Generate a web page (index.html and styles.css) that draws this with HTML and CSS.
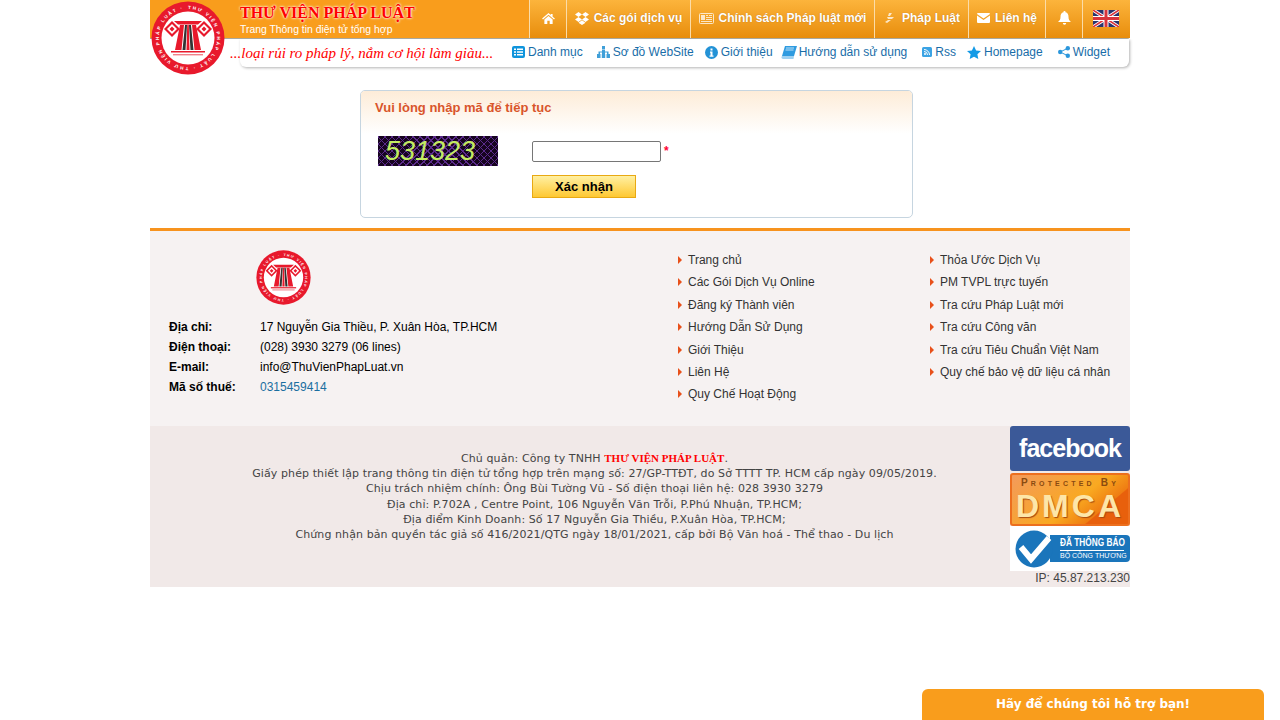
FILE: index.html
```html
<!DOCTYPE html>
<html lang="vi">
<head>
    <meta charset="UTF-8">
    <meta name="viewport" content="width=device-width, initial-scale=1.0">
    <title>Thư Viện Pháp Luật</title>
    <link rel="stylesheet" href="styles.css">
</head>
<body>
    <div class="page">
        <header class="header">
            <svg class="seal-top" viewBox="0 0 74 74">
                <circle cx="37" cy="37" r="36.5" fill="#e8192c"/>
                <circle cx="37" cy="37" r="26.5" fill="#fff"/>
                <path id="ring-top" d="M37 8a29 29 0 1 1-.01 0" fill="none"/>
                <text class="seal-text"><textPath href="#ring-top" textLength="176">THƯ VIỆN PHÁP LUẬT · THƯ VIỆN PHÁP LUẬT · </textPath></text>
                <path d="M21 20l8 8-8 8-8-8z" fill="#e8192c"/>
                <path d="M21 23l5 5-5 5-5-5z" fill="#fff"/>
                <path d="M21 25.500l2.500 2.500-2.500 2.500-2.500-2.500z" fill="#e8192c"/>
                <path d="M53 20l8 8-8 8-8-8z" fill="#e8192c"/>
                <path d="M53 23l5 5-5 5-5-5z" fill="#fff"/>
                <path d="M53 25.500l2.500 2.500-2.500 2.500-2.500-2.500z" fill="#e8192c"/>
                <path d="M23 20h28l-4 3.500H27z" fill="#e8192c"/>
                <path d="M29 24h4l-2.500 25h-6.500zM41 24h4l5 25h-6.500z" fill="#e8192c"/>
                <path d="M34 24h2l-1.500 25h-3zM38 24h2l2.500 25h-3z" fill="#333"/>
                <path d="M36.200 24h1.600l.700 25h-3z" fill="#e8192c"/>
                <path d="M20 50h34v1.600H20z" fill="#e8192c"/>
                <path d="M22 53h30v1.400H22z" fill="#f28089"/>
            </svg>
            <div class="topbar">
                <div class="brand">
                    <div class="brand-name">THƯ VIỆN PHÁP LUẬT</div>
                    <div class="brand-sub">Trang Thông tin điện tử tổng hợp</div>
                </div>
                <nav class="mainnav">
                    <a class="nav-home">
                        <svg width="13" height="11" viewBox="0 0 14 12"><path d="M7 0 0 6l1 1 6-5 6 5 1-1-2.500-2V1h-2v1.200z" fill="#fff"/><path d="M2.500 7 7 3.200 11.500 7v5H8.300V8.500H5.700V12H2.500z" fill="#fff"/></svg>
                    </a>
                    <a class="nav-packs">
                        <svg width="14" height="13" viewBox="0 0 14 13"><path d="M3.500 0 7 2.500 3.500 5 0 2.500zM10.500 0 14 2.500 10.500 5 7 2.500zM3.500 5 7 7.500 3.500 10 0 7.500zM10.500 5 14 7.500 10.500 10 7 7.500zM3.500 10.800 7 8.300l3.500 2.500L7 13z" fill="#fff"/></svg>
                        Các gói dịch vụ
                    </a>
                    <a class="nav-policy">
                        <svg class="dim" width="15" height="11" viewBox="0 0 15 11"><rect x=".5" y=".5" width="14" height="10" rx="1" fill="none" stroke="#fff"/><path d="M2 2h4v5H2zM7 2h2v1H7zM10 2h3v1h-3zM7 4h6v1H7zM7 6h6v1H7zM2 8h11v1H2z" fill="#fff"/></svg>
                        Chính sách Pháp luật mới
                    </a>
                    <a class="nav-law">
                        <svg class="dim" width="10" height="11" viewBox="0 0 10 11"><path d="M4 0h3L5 3H3zM2 4h7L7 6H3zM0 9l3-2h3L2 10z" fill="#fff"/></svg>
                        Pháp Luật
                    </a>
                    <a class="nav-contact">
                        <svg width="13" height="10" viewBox="0 0 13 10"><path d="M0 1a1 1 0 0 1 1-1h11a1 1 0 0 1 1 1L6.500 5.500z" fill="#fff"/><path d="M0 2.500 6.500 7 13 2.500V9a1 1 0 0 1-1 1H1a1 1 0 0 1-1-1z" fill="#fff"/></svg>
                        Liên hệ
                    </a>
                    <a class="nav-bell">
                        <svg width="13" height="14" viewBox="0 0 13 14"><path d="M6.500 0a1 1 0 0 1 1 1.200C9.800 1.700 10.500 3.600 10.500 6c0 2.500 1 3.500 2.500 5H0c1.500-1.500 2.500-2.500 2.500-5 0-2.400.7-4.300 3-4.800a1 1 0 0 1 1-1.200zM4.800 12h3.400a1.700 1.700 0 0 1-3.400 0z" fill="#fff"/></svg>
                    </a>
                    <a class="nav-flag">
                        <svg width="26" height="17" viewBox="0 0 26 17">
                            <rect width="26" height="17" fill="#27346e"/>
                            <path d="M0 0 26 17M26 0 0 17" stroke="#fff" stroke-width="3.400"/>
                            <path d="M0 0 26 17M26 0 0 17" stroke="#d8343c" stroke-width="1.600"/>
                            <path d="M13 0v17M0 8.500h26" stroke="#fff" stroke-width="5"/>
                            <path d="M13 0v17M0 8.500h26" stroke="#d8343c" stroke-width="3"/>
                        </svg>
                    </a>
                </nav>
            </div>
            <div class="subbar">
                <div class="slogan">...loại rủi ro pháp lý, nắm cơ hội làm giàu...</div>
                <a class="sub-link sub-catalog">
                    <svg width="13" height="12" viewBox="0 0 13 12"><rect width="13" height="12" rx="2" fill="#0f94dc"/><path d="M2 2.500h2v1.500H2zM5 2.500h6v1.500H5zM2 5.300h2v1.500H2zM5 5.300h6v1.500H5zM2 8h2v1.500H2zM5 8h6v1.500H5z" fill="#fff"/></svg>
                    Danh mục
                </a>
                <a class="sub-link sub-sitemap">
                    <svg width="13" height="12" viewBox="0 0 13 12"><path d="M5 0h3v3.500H5zM0 8h3.500v4H0zM4.800 8h3.400v4H4.800zM9.500 8H13v4H9.500zM5 4h3v1.500h3.500V8H10V6.500H8V8H5V6.500H3V8H1.500V5.500H5z" fill="#3f9fd8"/></svg>
                    Sơ đồ WebSite
                </a>
                <a class="sub-link sub-about">
                    <svg width="13" height="13" viewBox="0 0 13 13"><circle cx="6.500" cy="6.500" r="6.500" fill="#2392d6"/><path d="M5.500 2.500h2v2h-2zM5 5.500h2.500V9.500h1v1.200H4.500V9.500h1V6.700H5z" fill="#fff"/></svg>
                    Giới thiệu
                </a>
                <a class="sub-link sub-guide">
                    <svg width="16" height="13" viewBox="0 0 16 13"><path d="M4 0h12l-3 10H1z" fill="#2f9be0"/><path d="M1 10h12l-.5 3H2a2 2 0 0 1-1-3z" fill="#9ed1f2"/><path d="M5 2h8M4.500 4h8" stroke="#bfe2f8"/></svg>
                    Hướng dẫn sử dụng
                </a>
                <a class="sub-link sub-rss">
                    <svg width="10" height="10" viewBox="0 0 10 10"><rect width="10" height="10" rx="1.500" fill="#3ba3e4"/><circle cx="3" cy="7" r="1" fill="#fff"/><path d="M2 4.500A3.500 3.500 0 0 1 5.500 8M2 2.500A5.500 5.500 0 0 1 7.500 8" stroke="#fff" fill="none"/></svg>
                    Rss
                </a>
                <a class="sub-link sub-home">
                    <svg width="14" height="13" viewBox="0 0 14 13"><path d="m7 0 2.100 4.400 4.900.6-3.600 3.300.9 4.700L7 10.700 2.700 13l.9-4.700L0 5l4.900-.6z" fill="#139ae6"/></svg>
                    Homepage
                </a>
                <a class="sub-link sub-widget">
                    <svg width="12" height="12" viewBox="0 0 12 12"><circle cx="9.800" cy="2.200" r="2.200" fill="#2b97dc"/><circle cx="2.200" cy="6" r="2.200" fill="#2b97dc"/><circle cx="9.800" cy="9.800" r="2.200" fill="#2b97dc"/><path d="M9.800 2.200 2.200 6l7.600 3.800" stroke="#2b97dc" fill="none"/></svg>
                    Widget
                </a>
            </div>
        </header>

        <main class="captcha-box">
            <h2 class="captcha-title">Vui lòng nhập mã để tiếp tục</h2>
            <div class="captcha-body">
                <div class="captcha-img">531323</div>
                <form class="captcha-form">
                    <div class="captcha-row">
                        <input class="captcha-input" type="text">
                        <span class="required">*</span>
                    </div>
                    <button class="captcha-btn" type="button">Xác nhận</button>
                </form>
            </div>
        </main>

        <footer class="footer">
            <div class="footer-top">
                <div class="contact">
                    <svg class="seal-foot" viewBox="0 0 74 74">
                        <circle cx="37" cy="37" r="36.5" fill="#e8192c"/>
                        <circle cx="37" cy="37" r="26.5" fill="#fff"/>
                        <path id="ring-foot" d="M37 8a29 29 0 1 1-.01 0" fill="none"/>
                        <text class="seal-text"><textPath href="#ring-foot" textLength="176">THƯ VIỆN PHÁP LUẬT · THƯ VIỆN PHÁP LUẬT · </textPath></text>
                        <path d="M21 20l8 8-8 8-8-8z" fill="#e8192c"/>
                        <path d="M21 23l5 5-5 5-5-5z" fill="#fff"/>
                        <path d="M21 25.500l2.500 2.500-2.500 2.500-2.500-2.500z" fill="#e8192c"/>
                        <path d="M53 20l8 8-8 8-8-8z" fill="#e8192c"/>
                        <path d="M53 23l5 5-5 5-5-5z" fill="#fff"/>
                        <path d="M53 25.500l2.500 2.500-2.500 2.500-2.500-2.500z" fill="#e8192c"/>
                        <path d="M23 20h28l-4 3.500H27z" fill="#e8192c"/>
                        <path d="M29 24h4l-2.500 25h-6.500zM41 24h4l5 25h-6.500z" fill="#e8192c"/>
                        <path d="M34 24h2l-1.500 25h-3zM38 24h2l2.500 25h-3z" fill="#333"/>
                        <path d="M36.200 24h1.600l.700 25h-3z" fill="#e8192c"/>
                        <path d="M20 50h34v1.600H20z" fill="#e8192c"/>
                        <path d="M22 53h30v1.400H22z" fill="#f28089"/>
                    </svg>
                    <div class="contact-row"><b>Địa chỉ:</b><span>17 Nguyễn Gia Thiều, P. Xuân Hòa, TP.HCM</span></div>
                    <div class="contact-row"><b>Điện thoại:</b><span>(028) 3930 3279 (06 lines)</span></div>
                    <div class="contact-row"><b>E-mail:</b><span>info@ThuVienPhapLuat.vn</span></div>
                    <div class="contact-row"><b>Mã số thuế:</b><span class="tax">0315459414</span></div>
                </div>
                <ul class="links links-one">
                    <li>Trang chủ</li>
                    <li>Các Gói Dịch Vụ Online</li>
                    <li>Đăng ký Thành viên</li>
                    <li>Hướng Dẫn Sử Dụng</li>
                    <li>Giới Thiệu</li>
                    <li>Liên Hệ</li>
                    <li>Quy Chế Hoạt Động</li>
                </ul>
                <ul class="links links-two">
                    <li>Thỏa Ước Dịch Vụ</li>
                    <li>PM TVPL trực tuyến</li>
                    <li>Tra cứu Pháp Luật mới</li>
                    <li>Tra cứu Công văn</li>
                    <li>Tra cứu Tiêu Chuẩn Việt Nam</li>
                    <li>Quy chế bảo vệ dữ liệu cá nhân</li>
                </ul>
            </div>
            <div class="footer-bottom">
                <div class="legal">
                    <p>Chủ quản: Công ty TNHH <b class="legal-name">THƯ VIỆN PHÁP LUẬT</b>.</p>
                    <p>Giấy phép thiết lập trang thông tin điện tử tổng hợp trên mạng số: 27/GP-TTĐT, do Sở TTTT TP. HCM cấp ngày 09/05/2019.</p>
                    <p>Chịu trách nhiệm chính: Ông Bùi Tường Vũ - Số điện thoại liên hệ: 028 3930 3279</p>
                    <p>Địa chỉ: P.702A , Centre Point, 106 Nguyễn Văn Trỗi, P.Phú Nhuận, TP.HCM;</p>
                    <p>Địa điểm Kinh Doanh: Số 17 Nguyễn Gia Thiều, P.Xuân Hòa, TP.HCM;</p>
                    <p>Chứng nhận bản quyền tác giả số 416/2021/QTG ngày 18/01/2021, cấp bởi Bộ Văn hoá - Thể thao - Du lịch</p>
                </div>
                <div class="badges">
                    <div class="badge-fb">facebook</div>
                    <div class="badge-dmca">
                        <div class="dmca-top">Protected By</div>
                        <div class="dmca-big">DMCA</div>
                    </div>
                    <div class="badge-bct">
                        <svg class="bct-check" width="38" height="38" viewBox="0 0 38 38"><circle cx="19" cy="19" r="18.500" fill="#1a75bb"/><path d="M6 17 16 29 34 8" fill="none" stroke="#fff" stroke-width="6"/></svg>
                        <div class="bct-text">
                            <div class="bct-main"><span>ĐÃ THÔNG BÁO</span></div>
                            <div class="bct-sub">BỘ CÔNG THƯƠNG</div>
                        </div>
                    </div>
                    <div class="ip">IP: 45.87.213.230</div>
                </div>
            </div>
        </footer>
    </div>

    <div class="support">Hãy để chúng tôi hỗ trợ bạn!</div>
</body>
</html>
```

FILE: styles.css
```css
body {
    margin: 0;
    background: #fff;
    font-family: "Liberation Sans", Arial, sans-serif;
    font-size: 12px;
    color: #333;
}

.seal-text {
    font-family: "Liberation Sans", sans-serif;
    font-size: 4.6px;
    font-weight: bold;
    fill: #fff;
}

.page {
    width: 980px;
    margin: 0 auto;
}

/* header */
.header {
    position: relative;
    height: 67px;
}

.seal-top {
    position: absolute;
    left: 1px;
    top: 1px;
    z-index: 1;
    width: 74px;
    height: 74px;
}

.topbar {
    height: 38px;
    display: flex;
    justify-content: space-between;
    background: #f99d1c;
    border-bottom: 1px solid #a8a8a0;
    border-radius: 0 0 3px 0;
}

.brand {
    padding: 4px 0 0 90px;
}

.brand-name {
    font-family: "Liberation Serif", serif;
    font-size: 16px;
    font-weight: bold;
    line-height: 18px;
    color: #f00;
    text-shadow: 0 0 3px #fff, 0 0 2px #fff;
}

.brand-sub {
    font-size: 10.4px;
    line-height: 13px;
    margin-top: 1px;
    color: #fff;
}

.mainnav {
    width: 601px;
    display: grid;
    grid-template-columns: 37px 124px 184px 94px 77px 37px 47px;
    background: linear-gradient(to bottom, #fcb43c, #e88d0c);
}

.mainnav a {
    display: flex;
    align-items: center;
    justify-content: center;
    gap: 5px;
    border-left: 1px solid #fbdca8;
    font-weight: bold;
    color: #fff;
    padding-bottom: 2px;
    text-shadow: 0 0 1px rgba(120, 60, 0, 0.5);
}

.mainnav .nav-law {
    gap: 7px;
    padding-left: 2px;
}

.dim {
    opacity: 0.75;
}

.subbar {
    height: 28px;
    display: flex;
    align-items: center;
    position: relative;
    margin-left: 80px;
    padding-bottom: 2px;
    box-sizing: border-box;
}

/* the shadow starts right of the seal, under the slogan */
.subbar::after {
    content: "";
    position: absolute;
    left: 10px;
    right: 1px;
    top: 0;
    bottom: 0;
    z-index: -1;
    border-radius: 0 0 6px 6px;
    box-shadow: 1px 1px 3px rgba(0, 0, 0, 0.3);
    clip-path: inset(0 -6px -6px -6px);
}

.slogan {
    width: 282px;
    padding-top: 2px;
    font-family: "Liberation Serif", serif;
    font-style: italic;
    font-size: 15px;
    color: #f00;
    flex-shrink: 0;
}

.sub-link {
    display: flex;
    align-items: center;
    gap: 3px;
    color: #186da8;
    white-space: nowrap;
}

.sub-sitemap { margin-left: 14px; }
.sub-about { margin-left: 11px; }
.sub-guide { margin-left: 8px; gap: 2px; }
.sub-rss { margin-left: 15px; }
.sub-home { margin-left: 11px; }
.sub-widget { margin-left: 15px; }

/* captcha */
.captcha-box {
    width: 551px;
    height: 126px;
    margin: 23px 0 10px 210px;
    border: 1px solid #c6d5e0;
    border-radius: 5px;
    overflow: hidden;
}

.captcha-title {
    margin: 0;
    height: 43px;
    padding: 9px 14px 0;
    box-sizing: border-box;
    font-size: 13px;
    color: #d9552b;
    background: linear-gradient(to bottom, #fdecd8, #fff);
}

.captcha-body {
    display: flex;
    padding: 2px 0 0 17px;
}

.captcha-img {
    width: 120px;
    height: 30px;
    box-sizing: border-box;
    padding-left: 7px;
    background-color: #16041f;
    background-image:
        repeating-linear-gradient(45deg, #5b2b8c 0 1px, transparent 1px 5px),
        repeating-linear-gradient(-45deg, #5b2b8c 0 1px, transparent 1px 5px);
    font-style: italic;
    font-size: 27px;
    line-height: 30px;
    color: #c3ec62;
}

.captcha-form {
    margin-left: 34px;
    padding-top: 5px;
}

.captcha-row {
    display: flex;
    gap: 3px;
    color: #f03;
}

.required {
    margin-top: 3px;
    font-weight: bold;
}

.captcha-input {
    width: 129px;
    height: 21px;
    padding: 0;
    box-sizing: border-box;
    border: 1px solid #767676;
    border-radius: 2px;
}

.captcha-btn {
    display: block;
    width: 104px;
    height: 23px;
    margin-top: 13px;
    padding: 0;
    border: 1px solid #e8a913;
    background: linear-gradient(to bottom, #fff0a2, #fec832);
    font-family: inherit;
    font-size: 13px;
    font-weight: bold;
    color: #000;
}

/* footer */
.footer {
    border-top: 3px solid #f7931e;
}

.footer-top {
    height: 195px;
    display: flex;
    background: #f6f2f2;
}

.contact {
    width: 528px;
    padding: 19px 0 0 19px;
    box-sizing: border-box;
}

.seal-foot {
    display: block;
    width: 55px;
    height: 55px;
    margin: 0 0 12px 87px;
}

.contact-row {
    display: flex;
    height: 20px;
    line-height: 20px;
    color: #000;
}

.contact-row b {
    width: 91px;
}

.tax {
    color: #1a6ea0;
}

.links {
    list-style: none;
    margin: 0;
    padding: 18px 0 0;
    color: #333;
}

.links-one {
    width: 252px;
}

.links li {
    height: 22.4px;
    line-height: 22px;
    padding-left: 10px;
    position: relative;
}

.links li::before {
    content: "";
    position: absolute;
    left: 0;
    top: 7px;
    border-left: 4px solid #e8501a;
    border-top: 4px solid transparent;
    border-bottom: 4px solid transparent;
}

.footer-bottom {
    height: 161px;
    display: flex;
    background: #f1e9e8;
}

.legal {
    width: 860px;
    box-sizing: border-box;
    padding: 25px 0 0 29px;
    font-family: "DejaVu Sans", sans-serif;
    font-size: 11px;
    line-height: 15.2px;
    letter-spacing: 0.09px;
    text-align: center;
    color: #444;
}

.legal p {
    margin: 0;
}

.legal-name {
    font-family: "Liberation Serif", serif;
    letter-spacing: 0;
    color: #f00;
}

.badges {
    width: 120px;
}

.badge-fb {
    height: 45px;
    background: #3b5998;
    border-radius: 3px;
    font-weight: bold;
    font-size: 25px;
    line-height: 45px;
    letter-spacing: -1px;
    text-align: center;
    color: #fff;
}

.badge-dmca {
    height: 53px;
    margin-top: 2px;
    box-sizing: border-box;
    border: 2px solid #ec6f1e;
    border-radius: 3px;
    background: linear-gradient(140deg, #f39a5c, #f9a921 55%, #ef7d12 75%, #e8600c 76%);
    text-align: center;
    overflow: hidden;
}

.dmca-top {
    font-size: 10px;
    font-variant: small-caps;
    line-height: 15px;
    font-weight: bold;
    letter-spacing: 3.2px;
    color: #8a4a10;
    white-space: nowrap;
}

.dmca-big {
    font-size: 32px;
    line-height: 33px;
    font-weight: bold;
    letter-spacing: 3px;
    color: #fde6a8;
    text-shadow: 1px 1px 1px #a84a10;
}

.badge-bct {
    height: 45px;
    display: flex;
    align-items: center;
    padding-left: 5px;
    box-sizing: border-box;
    background: #fff;
}

.bct-check {
    position: relative;
    z-index: 1;
    flex-shrink: 0;
}

.bct-text {
    width: 80px;
    height: 27px;
    margin-left: -3px;
    padding-left: 10px;
    box-sizing: border-box;
    background: #1a75bb;
    border-radius: 0 4px 4px 0;
    color: #fff;
    white-space: nowrap;
    overflow: hidden;
}

.bct-main {
    width: 64px;
    font-size: 11.5px;
    font-weight: bold;
    line-height: 15px;
    border-bottom: 1px solid #fff;
}

.bct-main span {
    display: inline-block;
    transform: scaleX(0.72);
    transform-origin: left;
}

.bct-sub {
    font-size: 7px;
    line-height: 10px;
}

.ip {
    line-height: 14px;
    text-align: right;
    color: #444;
}

/* support tab */
.support {
    position: fixed;
    right: 16px;
    bottom: 0;
    width: 342px;
    height: 31px;
    border-radius: 6px 6px 0 0;
    background: #f99d1c;
    font-family: "DejaVu Sans", sans-serif;
    font-size: 12px;
    font-weight: bold;
    line-height: 31px;
    text-align: center;
    color: #fff;
}
```
